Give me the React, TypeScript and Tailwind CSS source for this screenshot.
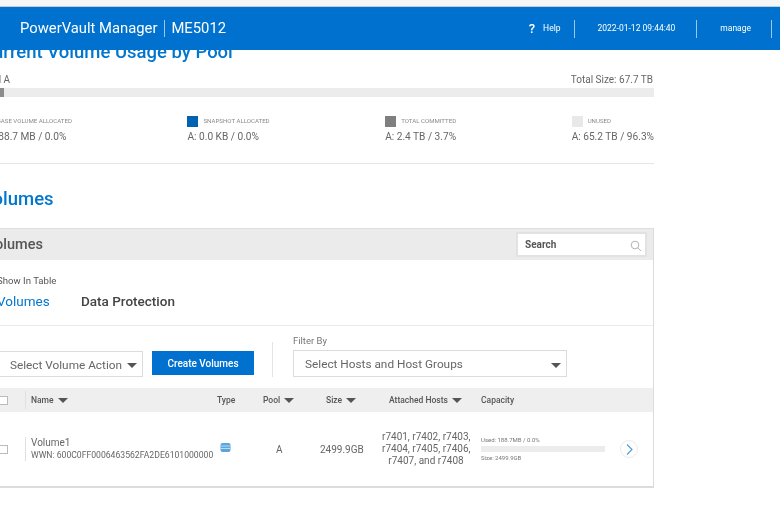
import React from "react";

const Caret = ({ className = "" }: { className?: string }) => (
  <svg width="10" height="5" viewBox="0 0 10 5" className={className}><path d="M0 0h10L5 5z" fill="#555" /></svg>
);

const Legend = ({ color, label, value }: { color: string; label: string; value: string }) => (
  <div className="flex flex-col">
    <div className="flex items-center gap-[5px] h-[11px]">
      <span className={`w-[11px] h-[11px] ${color}`} />
      <span className="text-[6.1px] text-[#8a8a8a] uppercase leading-none">{label}</span>
    </div>
    <div className="mt-[2px] text-[10.15px] leading-[15px] text-[#666]">{value}</div>
  </div>
);

const Head = ({ w, label, sort }: { w: string; label: string; sort?: boolean }) => (
  <div className={`${w} flex items-center gap-[4px] text-[8.5px] font-medium text-[#555]`}>
    {label}
    {sort && <Caret />}
  </div>
);

export default function App() {
  return (
    <div className="w-[780px] h-[516px] overflow-hidden bg-white flex flex-col font-['Roboto',sans-serif] blur-[0.5px]">
      <div className="h-[7px] shrink-0 bg-[#f6f6f6] border-b border-[#c4ccd4]" />
      <header className="h-[43px] shrink-0 bg-[#0071ce] text-white flex items-center relative z-10">
        <div className="ml-[20px] text-[14.8px] leading-none">PowerVault Manager</div>
        <div className="ml-[7px] w-px h-[17px] bg-[#9cc8ea]" />
        <div className="ml-[6px] text-[14.8px] leading-none">ME5012</div>
        <div className="ml-auto flex items-center h-[18px] text-[8.5px]">
          <span className="text-[13px] font-medium leading-none mr-[8px]">?</span>
          <span className="mr-[13px]">Help</span>
          <span className="w-px h-[18px] bg-[#9cc8ea]" />
          <span className="ml-[23px] mr-[21px]">2022-01-12 09:44:40</span>
          <span className="w-px h-[18px] bg-[#9cc8ea]" />
          <span className="ml-[23px] mr-[20px]">manage</span>
          <span className="w-px h-[18px] bg-[#9cc8ea] mr-[8px]" />
        </div>
      </header>

      <main className="-mt-[12px] -ml-[19px] w-[673px] shrink-0">
        <h2 className="text-[18.5px] leading-[28px] font-medium text-[#0076ce]">Current Volume Usage by Pool</h2>
        <div className="mt-[7px] flex justify-between text-[10px] leading-[13px] text-[#666]">
          <span>Pool A</span>
          <span className="mr-[1px]">Total Size: 67.7 TB</span>
        </div>
        <div className="mt-[2px] h-[9px] bg-[#ececec]">
          <div className="h-full w-[3.4%] bg-[#8c8c8c]" />
        </div>
        <div className="mt-[19px] flex justify-between">
          <Legend color="bg-[#0063b2]" label="Base Volume Allocated" value="A: 188.7 MB / 0.0%" />
          <Legend color="bg-[#0063b2]" label="Snapshot Allocated" value="A: 0.0 KB / 0.0%" />
          <Legend color="bg-[#7f7f7f]" label="Total Committed" value="A: 2.4 TB / 3.7%" />
          <Legend color="bg-[#e8e8e8]" label="Unused" value="A: 65.2 TB / 96.3%" />
        </div>
        <div className="mt-[19px] h-px bg-[#e6e6e6]" />
        <h2 className="mt-[22px] text-[18.5px] leading-[26px] font-medium text-[#0076ce]">Volumes</h2>

        <section className="mt-[16px] ml-[-2px] w-[675px] h-[260px] border-r border-b-2 border-[#dcdcdc] bg-white">
          <div className="h-[32px] bg-[#ebebeb] border-t border-[#dedede] flex items-center justify-between pl-[7px] pr-[6px]">
            <span className="text-[14.5px] font-medium text-[#555]">Volumes</span>
            <div className="w-[131px] h-[25px] bg-white border-2 border-[#e2e2e2] flex items-center justify-between pl-[7px] pr-[3px]">
              <span className="text-[10px] font-bold text-[#555]">Search</span>
              <svg width="12" height="12" viewBox="0 0 12 12" fill="none" stroke="#aaa" strokeWidth="0.9" className="mt-[3px]">
                <circle cx="5" cy="5" r="3.8" /><path d="M7.8 7.8L11 11" />
              </svg>
            </div>
          </div>
          <div className="h-[66px] border-b border-[#ececec] pl-[18px] pt-[15px]">
            <div className="text-[9.6px] leading-[12px] text-[#555]">Show In Table</div>
            <div className="mt-[4px] flex text-[13.5px] leading-[20px]">
              <span className="text-[#0076ce] w-[84px]">Volumes</span>
              <span className="text-[#444] font-medium">Data Protection</span>
            </div>
          </div>
          <div className="h-[62px] flex pl-[10px]">
            <div className="w-[154px] pt-[25px]">
              <div className="h-[26px] w-[154px] border border-[#dcdcdc] flex items-center justify-end pt-[3px] pr-[5px] gap-[5px] text-[11.8px] text-[#666]">
                Select Volume Action <Caret />
              </div>
            </div>
            <div className="ml-[9px] mt-[25px] h-[24px] w-[102px] bg-[#0071ce] text-white text-[10px] font-medium flex items-center justify-center">
              Create Volumes
            </div>
            <div className="ml-[18px] mt-[16px] w-px h-[35px] bg-[#e4e4e4]" />
            <div className="ml-[20px] pt-[9px]">
              <div className="text-[9.5px] leading-[12px] text-[#777]">Filter By</div>
              <div className="mt-[3px] h-[27px] w-[274px] border border-[#dcdcdc] flex items-center justify-between pt-[3px] pl-[11px] pr-[5px] text-[11.8px] text-[#666]">
                Select Hosts and Host Groups <Caret />
              </div>
            </div>
          </div>
          <div className="h-[24px] bg-[#efefef] flex items-center">
            <div className="w-[29px] shrink-0 flex justify-end"><span className="w-[9px] h-[9px] bg-white border border-[#bbb]" /></div>
            <div className="w-px h-[18px] bg-[#e0e0e0] ml-[17px]" />
            <div className="w-[5px]" />
            <Head w="w-[186px]" label="Name" sort />
            <Head w="w-[46px]" label="Type" />
            <Head w="w-[63px]" label="Pool" sort />
            <Head w="w-[63px]" label="Size" sort />
            <Head w="w-[92px]" label="Attached Hosts" sort />
            <Head w="w-[100px]" label="Capacity" />
          </div>
          <div className="h-[74px] flex items-center text-[#666]">
            <div className="w-[29px] shrink-0 flex justify-end"><span className="w-[9px] h-[9px] bg-white border border-[#bbb]" /></div>
            <div className="w-px h-[24px] bg-[#e0e0e0] ml-[17px]" />
            <div className="w-[5px]" />
            <div className="w-[186px] shrink-0">
              <div className="text-[10px] leading-[13px]">Volume1</div>
              <div className="text-[8.65px] leading-[13px] whitespace-nowrap">WWN: 600C0FF0006463562FA2DE6101000000</div>
            </div>
            <div className="w-[46px] shrink-0 pl-[3px]">
              <svg width="11" height="11" viewBox="0 0 11 11" className="-mt-[4px]">
                <rect x="0.5" y="1" width="10" height="9" rx="2" fill="#5aa5dc" />
                <path d="M1 4h9M1 6.5h9" stroke="#d5e9f7" strokeWidth="0.8" />
              </svg>
            </div>
            <div className="w-[57px] shrink-0 text-[10px] pl-[13px]">A</div>
            <div className="w-[62px] shrink-0 text-[10px]">2499.9GB</div>
            <div className="w-[88px] shrink-0 text-[10px] leading-[12px] text-center mr-[11px] whitespace-nowrap">
              r7401, r7402, r7403,<br />r7404, r7405, r7406,<br />r7407, and r7408
            </div>
            <div className="w-[124px] shrink-0">
              <div className="text-[6px] leading-[8px] text-[#777]">Used: 188.7MB / 0.0%</div>
              <div className="h-[6px] my-[2px] bg-[#ececec]" />
              <div className="text-[6px] leading-[8px] text-[#777]">Size: 2499.9GB</div>
            </div>
            <div className="ml-[15px] w-[18px] h-[18px] rounded-full border border-[#ececec] flex items-center justify-center">
              <svg width="7" height="11" viewBox="0 0 7 11" fill="none" stroke="#4f9ad6" strokeWidth="1.1"><path d="M1 0.5L6 5.5L1 10.5" /></svg>
            </div>
          </div>
        </section>
      </main>
    </div>
  );
}
